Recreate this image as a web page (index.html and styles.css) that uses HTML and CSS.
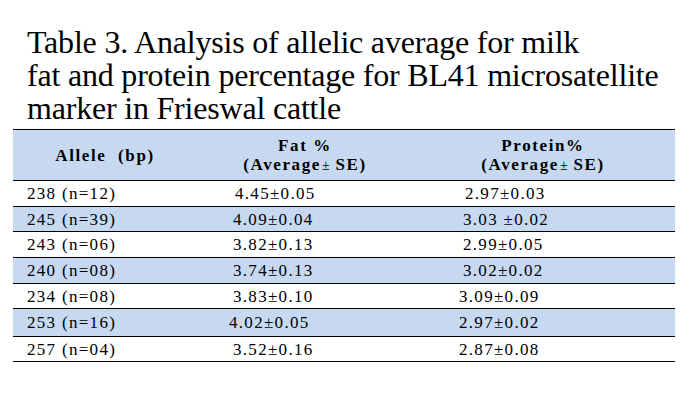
FILE: index.html
```html
<!DOCTYPE html>
<html lang="en">
<head>
<meta charset="utf-8">
<title>Table 3</title>
<link rel="stylesheet" href="styles.css">
</head>
<body>
<div class="page">
  <h1 class="title">Table 3. Analysis of allelic average for milk<br>fat and protein percentage for BL41 microsatellite<br>marker in Frieswal cattle</h1>
  <table class="data">
    <colgroup>
      <col class="c1">
      <col class="c2">
      <col class="c3">
    </colgroup>
    <thead>
      <tr>
        <th class="h1">Allele&nbsp; (bp)</th>
        <th class="h2">Fat %<br>(Average<span class="pm">±</span> SE)</th>
        <th class="h3">Protein%<br>(Average<span class="pm">±</span> SE)</th>
      </tr>
    </thead>
    <tbody>
      <tr><td>238 (n=12)</td><td><span class="nudge-r">4.45±0.05</span></td><td><span class="nudge-r">2.97±0.03</span></td></tr>
      <tr class="shade short"><td>245 (n=39)</td><td>4.09±0.04</td><td>3.03 ±0.02</td></tr>
      <tr><td>243 (n=06)</td><td>3.82±0.13</td><td>2.99±0.05</td></tr>
      <tr class="shade"><td>240 (n=08)</td><td>3.74±0.13</td><td>3.02±0.02</td></tr>
      <tr class="short"><td>234 (n=08)</td><td>3.83±0.10</td><td><span class="nudge-l">3.09±0.09</span></td></tr>
      <tr class="shade tall"><td>253 (n=16)</td><td><span class="nudge-l">4.02±0.05</span></td><td><span class="nudge-l">2.97±0.02</span></td></tr>
      <tr class="short"><td>257 (n=04)</td><td>3.52±0.16</td><td><span class="nudge-l">2.87±0.08</span></td></tr>
    </tbody>
  </table>
</div>
</body>
</html>
```

FILE: styles.css
```css
html, body {
  margin: 0;
  padding: 0;
  background: #ffffff;
}

.page {
  width: 700px;
  height: 403px;
  padding-top: 26px;
  box-sizing: border-box;
  font-family: "Liberation Serif", "Times New Roman", serif;
  color: #000000;
}

.title {
  margin: 0 0 4px 27px;
  font-size: 32px;
  line-height: 33px;
  font-weight: normal;
  letter-spacing: -0.2px;
}

.data {
  margin-left: 13px;
  width: 662px;
  border-collapse: collapse;
  table-layout: fixed;
}

.c1 { width: 206px; }
.c2 { width: 230px; }
.c3 { width: 226px; }

.data thead th {
  background: #c6d9f1;
  border-top: 1px solid #000;
  border-bottom: 1px solid #000;
  height: 49px;
  padding: 0;
  font-size: 17px;
  line-height: 19px;
  font-weight: bold;
  letter-spacing: 1.6px;
  text-align: center;
  vertical-align: middle;
}

.data thead th.h1 { padding-right: 22px; padding-top: 1px; }
.data thead th.h2 { padding-right: 58px; }
.data thead th.h3 { padding-right: 38px; }

.pm {
  font-weight: normal;
  font-size: 14px;
  letter-spacing: 0;
  margin-left: 1px;
}

.data tbody td {
  height: 25px;
  padding: 0 0 0 14px;
  border-bottom: 1px solid #000;
  font-size: 17px;
  line-height: 19px;
  letter-spacing: 1.3px;
  vertical-align: middle;
  white-space: nowrap;
}

.data tbody tr.short td {
  height: 24px;
}

.data tbody tr.tall td {
  height: 27px;
}

.data tbody tr.shade td {
  background: #c6d9f1;
}

.nudge-l {
  margin-left: -4px;
}

.nudge-r {
  margin-left: 2px;
}
```
